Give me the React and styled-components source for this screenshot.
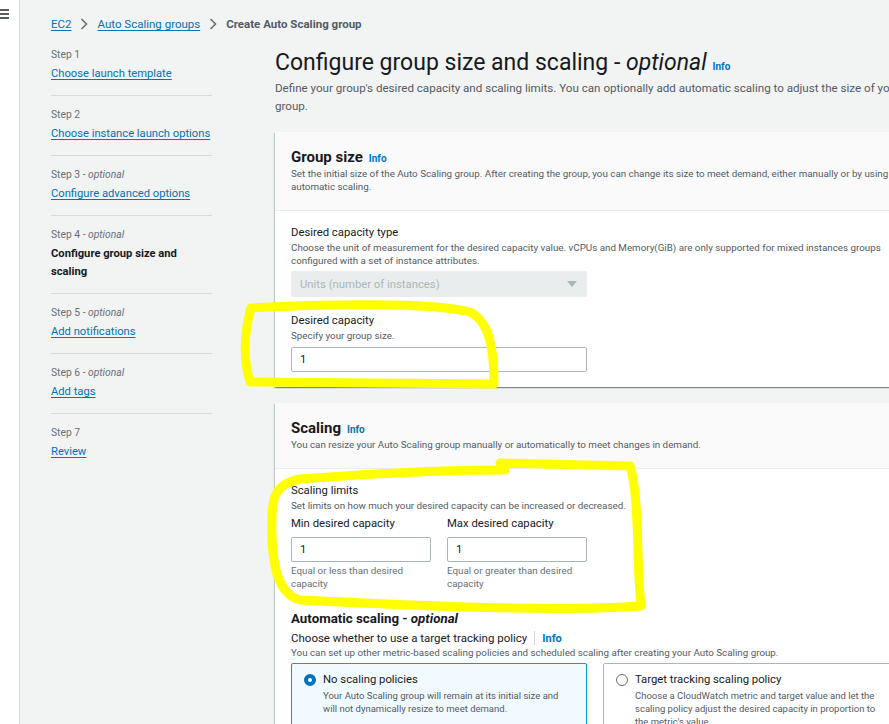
import React from "react";
import styled, { createGlobalStyle } from "styled-components";

const GlobalStyle = createGlobalStyle`
  html, body {
    margin: 0;
    padding: 0;
    background: #f2f3f3;
    overflow: hidden;
  }
  body {
    font-family: Roboto, "Liberation Sans", sans-serif;
    color: #16191f;
  }
`;

const Page = styled.div`
  position: relative;
  display: flex;
  width: 889px;
  height: 724px;
  overflow: hidden;
  background: #f2f3f3;
`;

const Rail = styled.div`
  flex: none;
  width: 20px;
  background: #fff;
  border-right: 1px solid #d5dbdb;
  padding-top: 9px;
  box-sizing: border-box;
`;

const Burger = styled.div`
  display: flex;
  flex-direction: column;
  gap: 2px;
  width: 9px;
  & span {
    height: 2px;
    background: #545b64;
  }
`;

const Content = styled.div`
  flex: none;
  padding: 15px 0 0 31px;
`;

const Crumbs = styled.nav`
  display: flex;
  align-items: center;
  gap: 9px;
  height: 18px;
  font-size: 11.5px;
`;

const Link = styled.a`
  color: #0073bb;
  text-decoration: underline;
  text-underline-offset: 2px;
  cursor: pointer;
`;

const Current = styled.span`
  color: #545b64;
  font-weight: 700;
`;

const Columns = styled.div`
  display: flex;
  gap: 63px;
  margin-top: 3px;
`;

const Steps = styled.ol`
  flex: none;
  width: 161px;
  margin: 0;
  padding: 0;
  list-style: none;
`;

const Step = styled.li`
  padding: 10px 0 12px;
  border-bottom: 1px solid #d5dbdb;
  &:last-child {
    border-bottom: none;
  }
`;

const StepLabel = styled.div`
  font-size: 10.3px;
  line-height: 18px;
  color: #687078;
  & em {
    font-style: italic;
  }
`;

const StepTitle = styled.div`
  margin-top: 1px;
  font-size: 11.2px;
  line-height: 18px;
  font-weight: ${(p) => (p.active ? 700 : 400)};
  color: #16191f;
  white-space: ${(p) => (p.active ? "normal" : "nowrap")};
`;

const Main = styled.main`
  flex: none;
  width: 640px;
  padding-top: 13px;
`;

const H1 = styled.h1`
  margin: 0;
  font-size: 23px;
  line-height: 28px;
  font-weight: 400;
  & em {
    font-style: italic;
  }
`;

const Info = styled.a`
  margin-left: ${(p) => (p.flush ? 0 : 6)}px;
  font-size: ${(p) => p.size || 10}px;
  line-height: 1;
  font-weight: 700;
  color: #0073bb;
  text-decoration: none;
`;

const Lead = styled.p`
  margin: 2px 0 17px;
  font-size: 11.6px;
  line-height: 18px;
  color: #545b64;
`;

const Panel = styled.section`
  background: #fff;
  margin-bottom: 16px;
  box-shadow: 0 1px 1px 0 rgba(0, 28, 36, 0.3), 1px 1px 1px 0 rgba(0, 28, 36, 0.15),
    -1px 1px 1px 0 rgba(0, 28, 36, 0.15);
`;

const PanelHead = styled.header`
  background: #fafafa;
  padding: 15px 16px 17px;
  border-bottom: 1px solid #eaeded;
`;

const PanelTitle = styled.h2`
  margin: 0;
  font-size: 15px;
  line-height: 20px;
  font-weight: 700;
`;

const Hint = styled.div`
  font-size: 9.8px;
  line-height: 13px;
  color: #545b64;
`;

const PanelBody = styled.div`
  padding: 14px 16px 15px;
`;

const Field = styled.div`
  margin-top: ${(p) => p.gap || 0}px;
`;

const Label = styled.div`
  font-size: 11.3px;
  line-height: 16px;
  color: #16191f;
`;

const Select = styled.div`
  display: flex;
  align-items: center;
  justify-content: space-between;
  width: 296px;
  height: 26px;
  margin-top: 4px;
  padding: 0 9px;
  box-sizing: border-box;
  background: #eaeded;
  border-radius: 2px;
  font-size: 11.3px;
  color: #aab7b8;
`;

const Caret = styled.span`
  width: 0;
  height: 0;
  margin-right: 1px;
  border-left: 5px solid transparent;
  border-right: 5px solid transparent;
  border-top: 6px solid #aab7b8;
`;

const Input = styled.div`
  width: ${(p) => p.w}px;
  height: 25px;
  margin-top: ${(p) => p.top || 4}px;
  padding: 0 8px;
  box-sizing: border-box;
  display: flex;
  align-items: center;
  border: 1px solid #aab7b8;
  border-radius: 2px;
  background: #fff;
  font-size: 11.3px;
`;

const Pair = styled.div`
  display: flex;
  gap: 16px;
  margin-top: 4px;
`;

const Half = styled.div`
  width: 140px;
`;

const Helper = styled(Hint)`
  margin-top: 2px;
  color: #687078;
`;

const SubTitle = styled.h3`
  margin: 20px 0 0;
  font-size: 13.3px;
  line-height: 18px;
  font-weight: 700;
  & em {
    font-style: italic;
  }
`;

const Choose = styled.div`
  margin-top: 2px;
  font-size: 11.5px;
  line-height: 16px;
  display: flex;
  align-items: center;
`;

const Divider = styled.span`
  width: 1px;
  height: 14px;
  margin: 0 7px;
  background: #d5dbdb;
`;

const Cards = styled.div`
  display: grid;
  grid-template-columns: 296px 296px;
  gap: 16px;
  margin-top: 4px;
`;

const Card = styled.div`
  display: flex;
  gap: 7px;
  height: 80px;
  padding: 8px 12px;
  box-sizing: border-box;
  border: 1px solid ${(p) => (p.checked ? "#00a1c9" : "#aab7b8")};
  background: ${(p) => (p.checked ? "#f1faff" : "#fff")};
  border-radius: 2px;
`;

const Radio = styled.span`
  flex: none;
  width: 12px;
  height: 12px;
  margin-top: 2px;
  border-radius: 50%;
  box-sizing: border-box;
  border: ${(p) => (p.checked ? "4px solid #0073bb" : "1px solid #687078")};
  background: #fff;
`;

const CardTitle = styled.div`
  font-size: 11.3px;
  line-height: 16px;
`;

const CardText = styled(Hint)`
  margin-top: 1px;
  font-size: 9.5px;
  line-height: 13px;
`;

const Marker = styled.svg`
  position: absolute;
  left: 0;
  top: 0;
  pointer-events: none;
`;

const steps = [
  { label: "Step 1", title: "Choose launch template" },
  { label: "Step 2", title: "Choose instance launch options" },
  { label: "Step 3", optional: true, title: "Configure advanced options" },
  { label: "Step 4", optional: true, title: "Configure group size and scaling", active: true },
  { label: "Step 5", optional: true, title: "Add notifications" },
  { label: "Step 6", optional: true, title: "Add tags" },
  { label: "Step 7", title: "Review" },
];

const Chevron = () => (
  <svg width="8" height="12" viewBox="0 0 8 12">
    <path d="M1.5 1 L6.5 6 L1.5 11" fill="none" stroke="#687078" strokeWidth="1.6" />
  </svg>
);

export default function App() {
  return (
    <Page>
      <GlobalStyle />
      <Rail>
        <Burger>
          <span />
          <span />
          <span />
        </Burger>
      </Rail>
      <Content>
        <Crumbs>
          <Link>EC2</Link>
          <Chevron />
          <Link>Auto Scaling groups</Link>
          <Chevron />
          <Current>Create Auto Scaling group</Current>
        </Crumbs>
        <Columns>
          <Steps>
            {steps.map((s) => (
              <Step key={s.label}>
                <StepLabel>
                  {s.label}
                  {s.optional && (
                    <>
                      {" - "}
                      <em>optional</em>
                    </>
                  )}
                </StepLabel>
                <StepTitle active={s.active}>
                  {s.active ? s.title : <Link>{s.title}</Link>}
                </StepTitle>
              </Step>
            ))}
          </Steps>
          <Main>
            <H1>
              Configure group size and scaling - <em>optional</em>
              <Info>Info</Info>
            </H1>
            <Lead>
              Define your group's desired capacity and scaling limits. You can optionally add
              automatic scaling to adjust the size of your group.
            </Lead>

            <Panel>
              <PanelHead>
                <PanelTitle>
                  Group size<Info>Info</Info>
                </PanelTitle>
                <Hint>
                  Set the initial size of the Auto Scaling group. After creating the group, you can
                  change its size to meet demand, either manually or by using automatic scaling.
                </Hint>
              </PanelHead>
              <PanelBody>
                <Field>
                  <Label>Desired capacity type</Label>
                  <Hint>
                    Choose the unit of measurement for the desired capacity value. vCPUs and
                    Memory(GiB) are only supported for mixed instances groups configured with a set
                    of instance attributes.
                  </Hint>
                  <Select>
                    Units (number of instances)
                    <Caret />
                  </Select>
                </Field>
                <Field gap={16}>
                  <Label>Desired capacity</Label>
                  <Hint>Specify your group size.</Hint>
                  <Input w={296} top={5}>1</Input>
                </Field>
              </PanelBody>
            </Panel>

            <Panel>
              <PanelHead>
                <PanelTitle>
                  Scaling<Info>Info</Info>
                </PanelTitle>
                <Hint>
                  You can resize your Auto Scaling group manually or automatically to meet changes
                  in demand.
                </Hint>
              </PanelHead>
              <PanelBody>
                <Label>Scaling limits</Label>
                <Hint>Set limits on how much your desired capacity can be increased or decreased.</Hint>
                <Pair>
                  <Half>
                    <Label>Min desired capacity</Label>
                    <Input w={140} top={5}>1</Input>
                    <Helper>Equal or less than desired capacity</Helper>
                  </Half>
                  <Half>
                    <Label>Max desired capacity</Label>
                    <Input w={140} top={5}>1</Input>
                    <Helper>Equal or greater than desired capacity</Helper>
                  </Half>
                </Pair>
                <SubTitle>
                  Automatic scaling - <em>optional</em>
                </SubTitle>
                <Choose>
                  Choose whether to use a target tracking policy
                  <Divider />
                  <Info flush size={11}>Info</Info>
                </Choose>
                <Hint>
                  You can set up other metric-based scaling policies and scheduled scaling after
                  creating your Auto Scaling group.
                </Hint>
                <Cards>
                  <Card checked>
                    <Radio checked />
                    <div>
                      <CardTitle>No scaling policies</CardTitle>
                      <CardText>
                        Your Auto Scaling group will remain at its initial size and will not
                        dynamically resize to meet demand.
                      </CardText>
                    </div>
                  </Card>
                  <Card>
                    <Radio />
                    <div>
                      <CardTitle>Target tracking scaling policy</CardTitle>
                      <CardText>
                        Choose a CloudWatch metric and target value and let the scaling policy
                        adjust the desired capacity in proportion to the metric's value.
                      </CardText>
                    </div>
                  </Card>
                </Cards>
              </PanelBody>
            </Panel>
          </Main>
        </Columns>
      </Content>

      <Marker width="889" height="724" viewBox="0 0 889 724">
        <g fill="none" stroke="#ffff00" strokeWidth="9" strokeLinecap="round" strokeLinejoin="round">
          <path d="M251 308 C320 304 430 302 470 312 C490 322 494 350 494 384 L250 382 C243 360 244 332 251 308" />
          <path d="M500 463 L630 466 C640 500 636 560 641 606 C560 612 420 606 300 600 C276 594 271 560 272 520 C272 496 276 484 300 479 C380 473 450 470 505 470" />
        </g>
      </Marker>
    </Page>
  );
}
